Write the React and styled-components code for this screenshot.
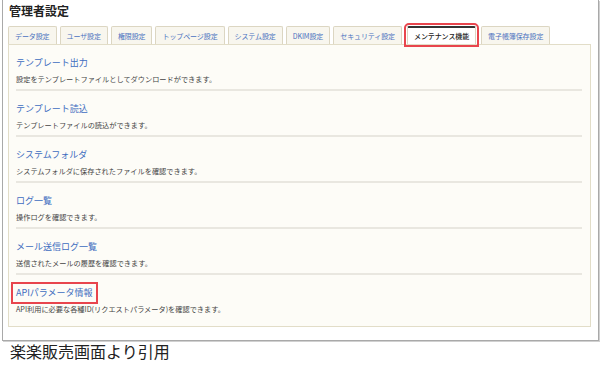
import React from "react";
import styled, { createGlobalStyle } from "styled-components";

const GlobalStyle = createGlobalStyle`
    body {
        margin: 0;
        background: #fff;
        font-family: "Noto Sans CJK JP", "Noto Sans", sans-serif;
    }
`;

// Moldura da captura
const Frame = styled.div`
    margin: 0 1px 0 2px;
    height: 341px;
    box-sizing: border-box;
    border: 1px solid #a9a9a9;
    border-top: none;
    box-shadow: 1px 1px 0 #d0d0d0;
    padding: 3px 7px 0 5px;
    background: #fff;
`;

const Title = styled.h1`
    margin: 0 0 0 1px;
    font-size: 12px;
    line-height: 16px;
    font-weight: 700;
    color: #222;
`;

const TabBar = styled.div`
    display: flex;
    align-items: flex-end;
    gap: 3px;
    margin: 7px 0 0 0;
    height: 18px;
`;

const Tab = styled.div`
    height: 18px;
    box-sizing: border-box;
    padding: 0 6px;
    display: flex;
    align-items: center;
    font-size: 7px;
    letter-spacing: -0.1px;
    white-space: nowrap;
    color: ${(props) => (props.active ? "#222" : "#4a72c0")};
    background: ${(props) => (props.active ? "#fff" : "#f8f6ee")};
    border: 1px solid #dcd6c2;
    border-top: ${(props) => (props.active ? "2px solid #333" : "1px solid #dcd6c2")};
    border-bottom: none;
    border-radius: 2px 2px 0 0;
    ${(props) => props.active && "outline: 2px solid #e8454d; outline-offset: 1px; font-weight: 500; margin: 0 2px;"}
`;

const Panel = styled.div`
    border: 1px solid #e2ddc8;
    background: #fdfcf7;
    padding: 0 8px 0 7px;
    height: 283px;
    box-sizing: border-box;
`;

const Item = styled.div`
    padding: 11px 0 5px;
    border-bottom: 2px solid #e9e7e0;
    font-size: 9px;
    line-height: 14px;

    &:last-child {
        border-bottom: none;
    }
`;

const ItemTitle = styled.div`
    width: fit-content;
    font-size: 9px;
    line-height: 14px;
    color: #3d6cc0;
    ${(props) => props.marked && "outline: 2px solid #e8454d; outline-offset: 2px; padding: 0 1px; margin-left: -1px;"}
`;

const ItemDesc = styled.div`
    margin-top: 4px;
    font-size: 7.2px;
    line-height: 10px;
    color: #444;
`;

const Caption = styled.p`
    margin: 0 0 0 10px;
    font-size: 16px;
    line-height: 20px;
    color: #222;
`;

const tabs = [
    "データ設定",
    "ユーザ設定",
    "権限設定",
    "トップページ設定",
    "システム設定",
    "DKIM設定",
    "セキュリティ設定",
    "メンテナンス機能",
    "電子帳簿保存設定",
];

const items = [
    { title: "テンプレート出力", desc: "設定をテンプレートファイルとしてダウンロードができます。" },
    { title: "テンプレート読込", desc: "テンプレートファイルの読込ができます。" },
    { title: "システムフォルダ", desc: "システムフォルダに保存されたファイルを確認できます。" },
    { title: "ログ一覧", desc: "操作ログを確認できます。" },
    { title: "メール送信ログ一覧", desc: "送信されたメールの履歴を確認できます。" },
    { title: "APIパラメータ情報", desc: "API利用に必要な各種ID(リクエストパラメータ)を確認できます。", marked: true },
];

const App = () => {
    return (
        <>
            <GlobalStyle />
            <Frame>
                <Title>管理者設定</Title>
                <TabBar>
                    {tabs.map((t) => (
                        <Tab key={t} active={t === "メンテナンス機能"}>{t}</Tab>
                    ))}
                </TabBar>
                <Panel>
                    {items.map((item) => (
                        <Item key={item.title}>
                            <ItemTitle marked={item.marked}>{item.title}</ItemTitle>
                            <ItemDesc>{item.desc}</ItemDesc>
                        </Item>
                    ))}
                </Panel>
            </Frame>
            <Caption>楽楽販売画面より引用</Caption>
        </>
    );
};

export default App;
